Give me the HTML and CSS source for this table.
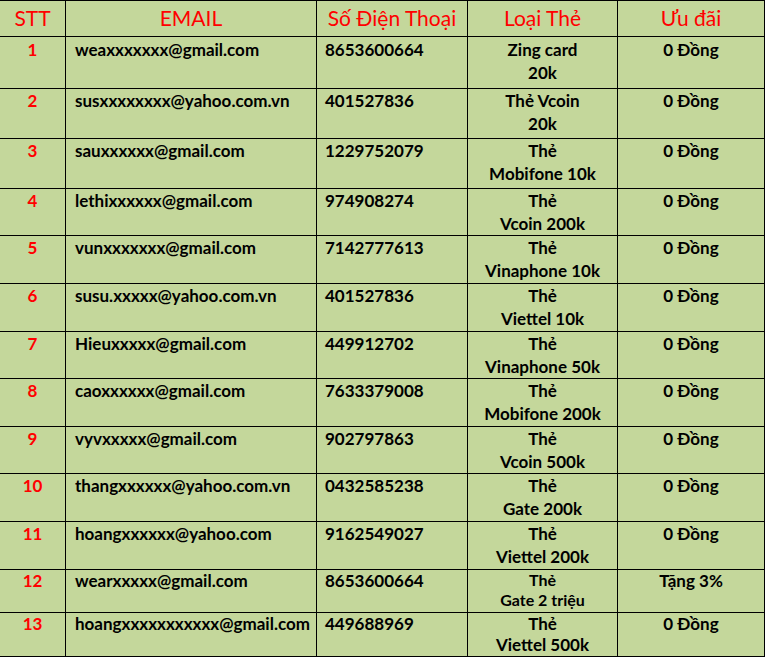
FILE: index.html
```html
<!DOCTYPE html>
<html lang="vi">
<head>
<meta charset="utf-8">
<title>Danh sách</title>
<link rel="stylesheet" href="styles.css">
</head>
<body>
<table class="list">
  <colgroup>
    <col class="c-stt"><col class="c-email"><col class="c-phone"><col class="c-card"><col class="c-gift">
  </colgroup>
  <thead>
    <tr class="head">
      <th>STT</th><th>EMAIL</th><th>Số Điện Thoại</th><th>Loại Thẻ</th><th>Ưu đãi</th>
    </tr>
  </thead>
  <tbody>
    <tr class="r1"><td class="stt">1</td><td class="email">weaxxxxxxx@gmail.com</td><td class="phone">8653600664</td><td class="card">Zing card<br>20k</td><td class="gift">0 Đồng</td></tr>
    <tr class="r2"><td class="stt">2</td><td class="email">susxxxxxxxx@yahoo.com.vn</td><td class="phone">401527836</td><td class="card">Thẻ Vcoin<br>20k</td><td class="gift">0 Đồng</td></tr>
    <tr class="r3"><td class="stt">3</td><td class="email">sauxxxxxx@gmail.com</td><td class="phone">1229752079</td><td class="card">Thẻ<br>Mobifone 10k</td><td class="gift">0 Đồng</td></tr>
    <tr class="r4"><td class="stt">4</td><td class="email">lethixxxxxx@gmail.com</td><td class="phone">974908274</td><td class="card">Thẻ<br>Vcoin 200k</td><td class="gift">0 Đồng</td></tr>
    <tr class="r5"><td class="stt">5</td><td class="email">vunxxxxxxx@gmail.com</td><td class="phone">7142777613</td><td class="card">Thẻ<br>Vinaphone 10k</td><td class="gift">0 Đồng</td></tr>
    <tr class="r6"><td class="stt">6</td><td class="email">susu.xxxxx@yahoo.com.vn</td><td class="phone">401527836</td><td class="card">Thẻ<br>Viettel 10k</td><td class="gift">0 Đồng</td></tr>
    <tr class="r7"><td class="stt">7</td><td class="email">Hieuxxxxx@gmail.com</td><td class="phone">449912702</td><td class="card">Thẻ<br>Vinaphone 50k</td><td class="gift">0 Đồng</td></tr>
    <tr class="r8"><td class="stt">8</td><td class="email">caoxxxxxx@gmail.com</td><td class="phone">7633379008</td><td class="card">Thẻ<br>Mobifone 200k</td><td class="gift">0 Đồng</td></tr>
    <tr class="r9"><td class="stt">9</td><td class="email">vyvxxxxx@gmail.com</td><td class="phone">902797863</td><td class="card">Thẻ<br>Vcoin 500k</td><td class="gift">0 Đồng</td></tr>
    <tr class="r10"><td class="stt">10</td><td class="email">thangxxxxxx@yahoo.com.vn</td><td class="phone">0432585238</td><td class="card">Thẻ<br>Gate 200k</td><td class="gift">0 Đồng</td></tr>
    <tr class="r11"><td class="stt">11</td><td class="email">hoangxxxxxx@yahoo.com</td><td class="phone">9162549027</td><td class="card">Thẻ<br>Viettel 200k</td><td class="gift">0 Đồng</td></tr>
    <tr class="r12"><td class="stt">12</td><td class="email">wearxxxxx@gmail.com</td><td class="phone">8653600664</td><td class="card small">Thẻ<br>Gate 2 triệu</td><td class="gift">Tặng 3%</td></tr>
    <tr class="r13"><td class="stt">13</td><td class="email">hoangxxxxxxxxxxx@gmail.com</td><td class="phone">449688969</td><td class="card tight">Thẻ<br>Viettel 500k</td><td class="gift">0 Đồng</td></tr>
  </tbody>
</table>
</body>
</html>
```

FILE: styles.css
```css
html, body {
  margin: 0;
  padding: 0;
  background: #ffffff;
}

.list {
  margin-left: -1px;
  border-collapse: separate;
  border-spacing: 1px;
  background: #000000;
  table-layout: fixed;
  width: 766px;
  font-family: "Lato", "Liberation Sans", sans-serif;
}

.c-stt { width: 65px; }
.c-email { width: 250px; }
.c-phone { width: 150px; }
.c-card { width: 149px; }
.c-gift { width: 146px; }

.list th,
.list td {
  background: #c4d79b;
  padding: 0;
  overflow: hidden;
  white-space: nowrap;
}

.list th {
  color: #ff0000;
  font-weight: 400;
  font-size: 21px;
  height: 35px;
  vertical-align: middle;
  text-align: center;
  padding-bottom: 2px;
  box-sizing: border-box;
}

.list td {
  vertical-align: top;
  font-weight: 700;
  font-size: 17px;
  line-height: 22.5px;
  color: #000000;
  padding-top: 1px;
  box-sizing: border-box;
}

.stt { color: #ff0000 !important; text-align: center; }
.email { padding-left: 9px !important; }
.phone { padding-left: 8px !important; }
.card { text-align: center; }
.gift { text-align: center; }

.r1 td { height: 51px; padding-top: 2px; }
.r2 td { height: 49px; }
.r3 td { height: 49px; }
.r4 td { height: 46px; }
.r5 td { height: 47px; }
.r6 td { height: 47px; }
.r7 td { height: 46px; }
.r8 td { height: 47px; }
.r9 td { height: 46px; }
.r10 td { height: 47px; }
.r11 td { height: 47px; }
.r12 td { height: 42px; padding-top: 0; }
.r13 td { height: 43px; padding-top: 0; }

.list td.small {
  font-size: 16px;
  line-height: 19.5px;
  padding-top: 0;
}

.list td.tight {
  line-height: 21px;
  padding-top: 0;
}
```
